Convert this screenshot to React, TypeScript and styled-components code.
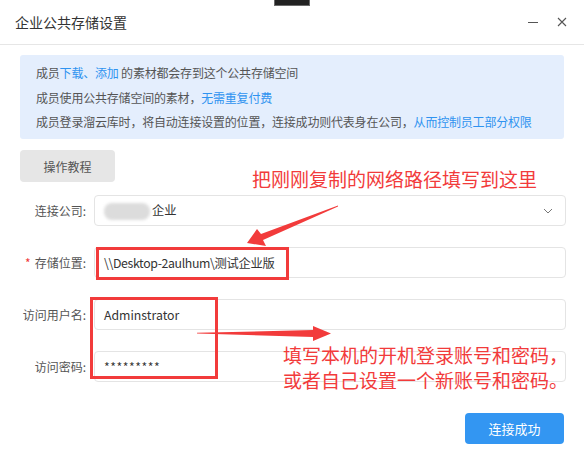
import React from 'react'
import styled, { createGlobalStyle } from 'styled-components'

const GlobalStyle = createGlobalStyle`
  html, body {
    margin: 0;
    padding: 0;
    background: #ffffff;
  }
  body {
    font-family: "Noto Sans CJK SC", "Noto Sans", sans-serif;
  }
`

const Page = styled.div`
  position: relative;
  width: 584px;
  height: 470px;
  overflow: hidden;
  background: #ffffff;
  color: #555;
`

const TopTab = styled.div`
  position: absolute;
  left: 274px;
  top: -2px;
  width: 34px;
  height: 6px;
  background: #222;
  border: 1px solid #6a6a6a;
`

const Header = styled.div`
  height: 44px;
  display: flex;
  align-items: center;
  justify-content: space-between;
  padding: 0 17px 0 15px;
  border-bottom: 1px solid #e6e6e6;
`

const Title = styled.div`
  font-size: 14px;
  color: #333;
`

const WindowButtons = styled.div`
  display: flex;
  align-items: center;
  gap: 19px;
`

const IconButton = styled.span`
  width: 10px;
  height: 10px;
  display: flex;
  align-items: center;
  justify-content: center;
`

const Body = styled.div`
  padding: 10px 20px 0 20px;
`

const Notice = styled.div`
  background: #e4eefd;
  border-radius: 3px;
  padding: 6px 16px 4px 16px;
  font-size: 12px;
  line-height: 24.7px;
  letter-spacing: -0.2px;
  color: #555;
`

const Link = styled.span`
  color: #2f93f0;
`

const GrayButton = styled.button`
  margin-top: 11px;
  width: 95px;
  height: 32px;
  border: none;
  border-radius: 4px;
  background: #e6e6e6;
  color: #555;
  font-family: inherit;
  font-size: 12px;
  padding: 0;
`

const Form = styled.div`
  margin-top: 13px;
  display: flex;
  flex-direction: column;
  gap: 21px;
`

const Row = styled.div`
  display: flex;
  align-items: center;
  gap: 8px;
`

const Label = styled.div`
  width: 66px;
  text-align: right;
  font-size: 12px;
  color: #555;
  white-space: nowrap;
`

const Required = styled.span`
  color: #f03a3a;
  margin-right: 4px;
`

const Field = styled.div`
  flex: 1;
  height: 31px;
  margin-right: -2px;
  box-sizing: border-box;
  border: 1px solid #e4e4e4;
  border-radius: 4px;
  display: flex;
  align-items: center;
  padding: 0 12px 0 9px;
  font-size: 12.3px;
  color: #333;
`

const FieldText = styled.span<{ spacing?: number }>`
  flex: 1;
  letter-spacing: ${({ spacing }) => (spacing ? `${spacing}px` : 'normal')};
`

const Blurred = styled.span`
  display: inline-block;
  width: 46px;
  height: 17px;
  margin-right: 2px;
  border-radius: 8px;
  background: #dcdcdc;
  filter: blur(1.5px);
  vertical-align: middle;
`

const Footer = styled.div`
  margin-top: 31px;
  display: flex;
  justify-content: flex-end;
`

const PrimaryButton = styled.button`
  width: 99px;
  height: 31px;
  border: none;
  border-radius: 4px;
  background: #3396f2;
  color: #ffffff;
  font-family: inherit;
  font-size: 13px;
  padding: 0;
`

// annotations drawn over the screenshot
const Overlay = styled.div`
  position: absolute;
  inset: 0;
  pointer-events: none;
`

const Note = styled.div<{ x: number; y: number }>`
  position: absolute;
  left: ${({ x }) => x}px;
  top: ${({ y }) => y}px;
  font-size: 19px;
  line-height: 25px;
  color: #f23b3b;
  white-space: nowrap;
`

const Frame = styled.div<{ x: number; y: number; w: number; h: number }>`
  position: absolute;
  left: ${({ x }) => x}px;
  top: ${({ y }) => y}px;
  width: ${({ w }) => w}px;
  height: ${({ h }) => h}px;
  box-sizing: border-box;
  border: 3px solid #f23b3b;
`

const Arrows = styled.svg`
  position: absolute;
  left: 0;
  top: 0;
`

export default function App() {
  return (
    <Page>
      <GlobalStyle />
      <TopTab />
      <Header>
        <Title>企业公共存储设置</Title>
        <WindowButtons>
          <IconButton>
            <svg width="10" height="10" viewBox="0 0 10 10">
              <line x1="0" y1="5.5" x2="10" y2="5.5" stroke="#555" strokeWidth="1" />
            </svg>
          </IconButton>
          <IconButton>
            <svg width="10" height="10" viewBox="0 0 10 10">
              <path d="M1 1 L9 9 M9 1 L1 9" stroke="#555" strokeWidth="1.1" />
            </svg>
          </IconButton>
        </WindowButtons>
      </Header>

      <Body>
        <Notice>
          <div>
            成员<Link>下载、添加</Link> 的素材都会存到这个公共存储空间
          </div>
          <div>
            成员使用公共存储空间的素材，<Link>无需重复付费</Link>
          </div>
          <div>
            成员登录溜云库时，将自动连接设置的位置，连接成功则代表身在公司，
            <Link>从而控制员工部分权限</Link>
          </div>
        </Notice>

        <GrayButton>操作教程</GrayButton>

        <Form>
          <Row>
            <Label>连接公司:</Label>
            <Field>
              <FieldText>
                <Blurred />
                企业
              </FieldText>
              <svg width="10" height="6" viewBox="0 0 10 6">
                <polyline points="1,1 5,5 9,1" fill="none" stroke="#777" strokeWidth="1" />
              </svg>
            </Field>
          </Row>
          <Row>
            <Label>
              <Required>*</Required>存储位置:
            </Label>
            <Field>
              <FieldText spacing={-0.35}>\\Desktop-2aulhum\测试企业版</FieldText>
            </Field>
          </Row>
          <Row>
            <Label>访问用户名:</Label>
            <Field>
              <FieldText>Adminstrator</FieldText>
            </Field>
          </Row>
          <Row>
            <Label>访问密码:</Label>
            <Field>
              <FieldText spacing={0.5}>*********</FieldText>
            </Field>
          </Row>
        </Form>

        <Footer>
          <PrimaryButton>连接成功</PrimaryButton>
        </Footer>
      </Body>

      <Overlay>
        <Note x={252} y={166}>把刚刚复制的网络路径填写到这里</Note>
        <Note x={283} y={342}>
          填写本机的开机登录账号和密码，
          <br />
          或者自己设置一个新账号和密码。
        </Note>
        <Frame x={96} y={247} w={193} h={33} />
        <Frame x={90} y={297} w={128} h={82} />
        <Arrows width="584" height="470" viewBox="0 0 584 470">
          <polygon
            points="338,205.5 261,234 257,229 247,243 266,246 263,240 338,206.5"
            fill="#f23b3b"
          />
          <polygon
            points="197,332.8 313,330 313,326 331,333.5 313,341 313,337 197,333.6"
            fill="#f23b3b"
          />
        </Arrows>
      </Overlay>
    </Page>
  )
}
